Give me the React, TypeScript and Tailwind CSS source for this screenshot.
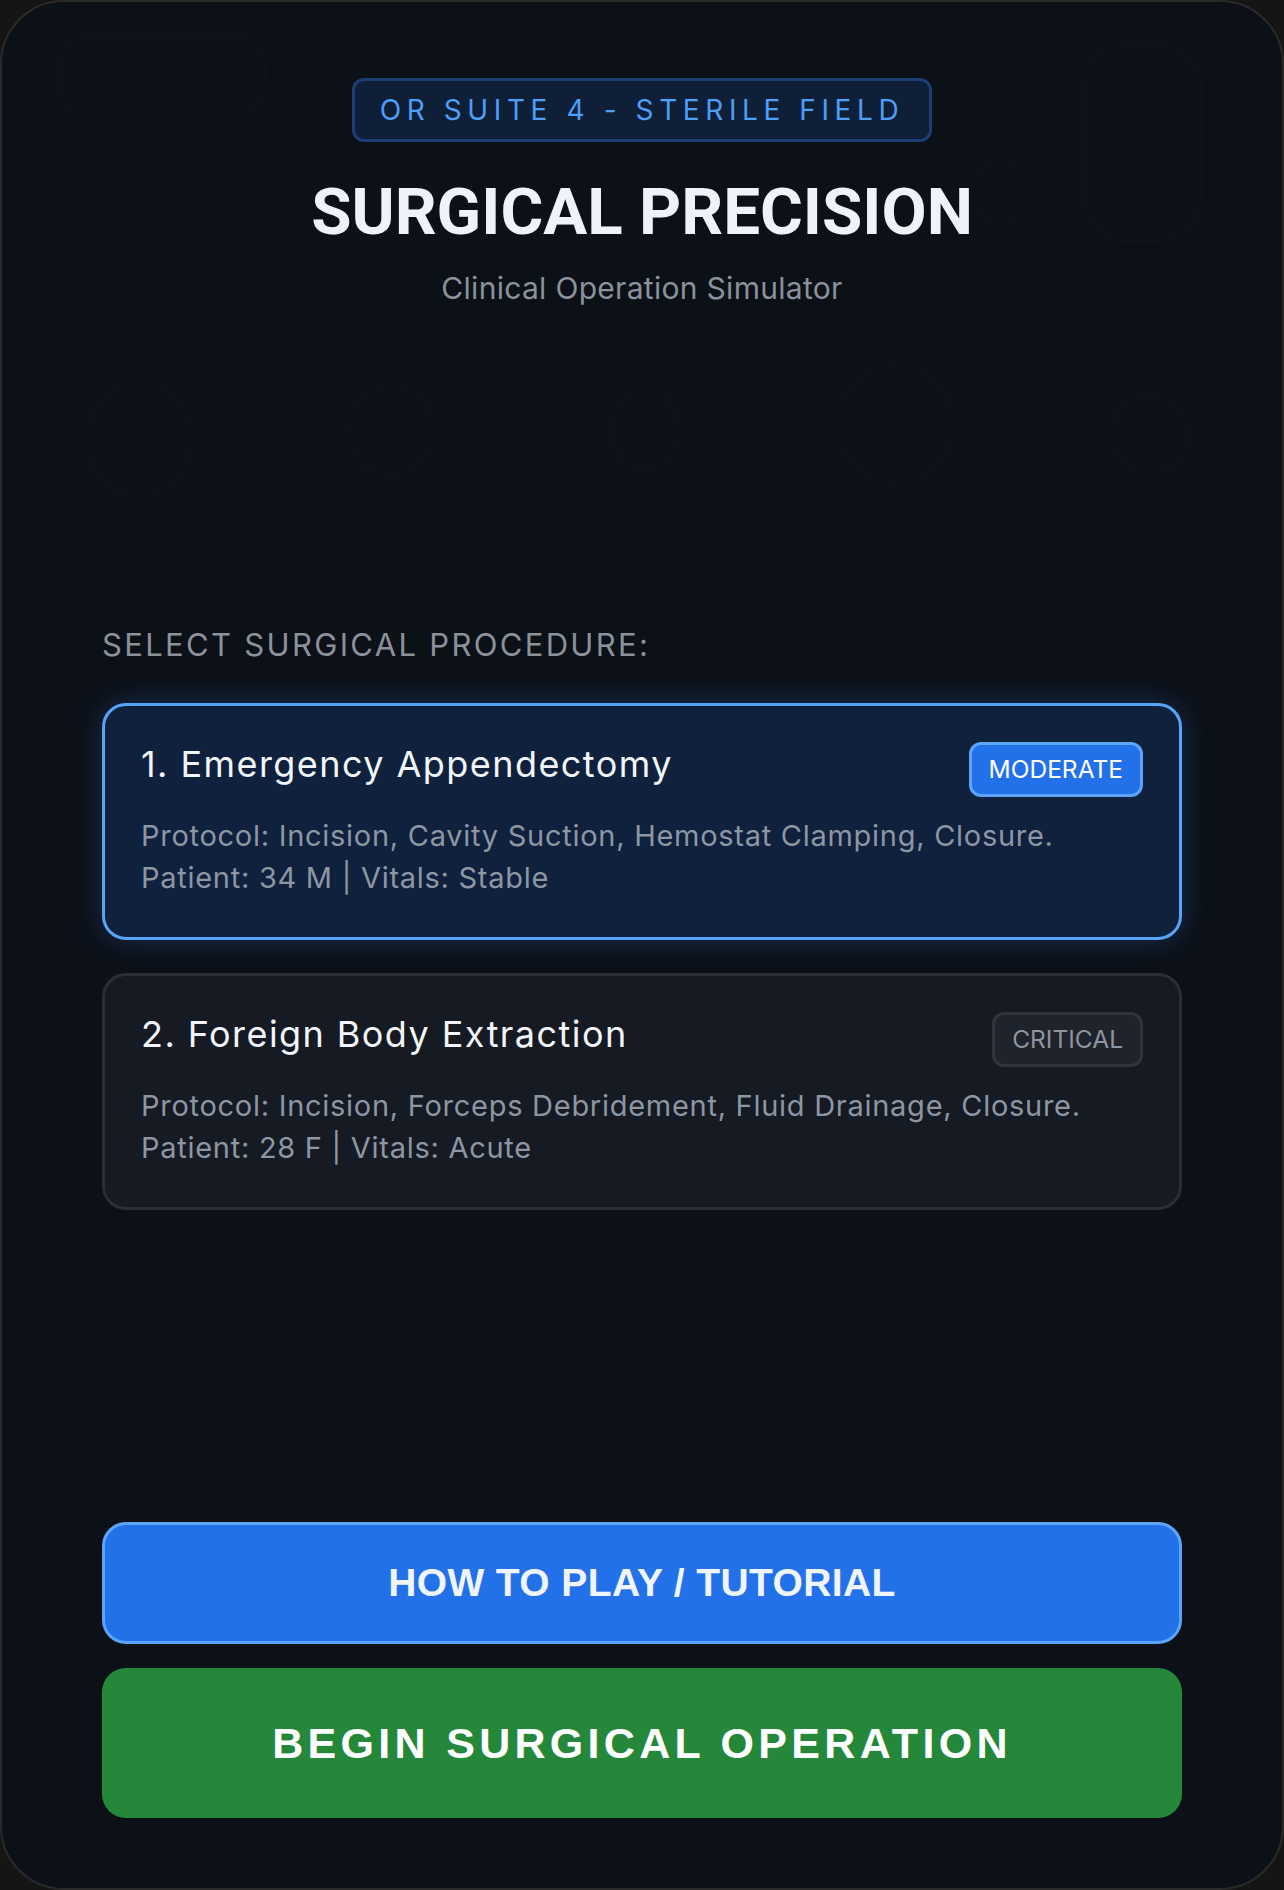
import React from "react";

type Procedure = {
  title: string;
  protocol: string;
  patient: string;
  level: string;
  selected: boolean;
};

const procedures: Procedure[] = [
  {
    title: "1. Emergency Appendectomy",
    protocol: "Protocol: Incision, Cavity Suction, Hemostat Clamping, Closure.",
    patient: "Patient: 34 M | Vitals: Stable",
    level: "MODERATE",
    selected: true,
  },
  {
    title: "2. Foreign Body Extraction",
    protocol: "Protocol: Incision, Forceps Debridement, Fluid Drainage, Closure.",
    patient: "Patient: 28 F | Vitals: Acute",
    level: "CRITICAL",
    selected: false,
  },
];

// Faint instrument silhouettes behind the menu
function Backdrop() {
  return (
    <svg
      className="pointer-events-none absolute inset-0 h-full w-full"
      viewBox="0 0 1280 1886"
      fill="rgba(255,255,255,0.006)"
      stroke="rgba(255,255,255,0.012)"
      strokeWidth="2"
    >
      <rect x="55" y="30" width="210" height="84" rx="30" />
      <rect x="1080" y="40" width="120" height="200" rx="40" />
      <circle cx="1000" cy="190" r="34" />
      <ellipse cx="137" cy="437" rx="55" ry="60" />
      <line x1="283" y1="380" x2="283" y2="470" />
      <ellipse cx="389" cy="428" rx="45" ry="48" />
      <ellipse cx="643" cy="427" rx="37" ry="43" />
      <ellipse cx="893" cy="422" rx="61" ry="62" />
      <ellipse cx="1148" cy="432" rx="41" ry="42" />
    </svg>
  );
}

function ProcedureCard({ p }: { p: Procedure }) {
  return (
    <div
      className={
        p.selected
          ? "rounded-[24px] border-[3px] border-[#58a3f8] bg-[#0f213d] px-[36px] pt-[36px] pb-[38px] shadow-[0_0_30px_rgba(56,139,253,0.26)]"
          : "rounded-[24px] border-[3px] border-[#2a2e36] bg-[#161a22] px-[36px] pt-[36px] pb-[38px]"
      }
    >
      <div className="flex items-start justify-between">
        <div className="text-[36px] leading-[44px] tracking-[0.04em] text-[#f2f5fa]">{p.title}</div>
        <div
          className={
            p.selected
              ? "flex h-[55px] items-center rounded-[12px] border-[3px] border-[#5ba4f7] bg-[#2271e8] px-[17px] text-[24.5px] text-white"
              : "flex h-[55px] items-center rounded-[12px] border-[3px] border-[#30343c] bg-[#1f232b] px-[17px] text-[24.5px] text-[#8f959d]"
          }
        >
          {p.level}
        </div>
      </div>
      <div className="mt-[18px] text-[29px] leading-[42px] tracking-[0.025em] text-[#8d96a3]">
        <div>{p.protocol}</div>
        <div>{p.patient}</div>
      </div>
    </div>
  );
}

export default function App() {
  return (
    <div className="min-h-[1890px] w-full bg-[#151515] font-['Inter',sans-serif]">
      <div className="relative flex h-[1890px] flex-col overflow-hidden rounded-[64px] border-2 border-[#2a2a2a] bg-[#0c1017] px-[100px] pt-[76px] pb-[70px]">
        <Backdrop />

        <header className="relative flex flex-col items-center">
          <div className="flex h-[64px] w-[580px] items-center justify-center rounded-[12px] border-[3px] border-[#1b3f75] bg-[#0f1f38] text-[28px] tracking-[0.2em] text-[#4d9ef5]">
            OR SUITE 4 - STERILE FIELD
          </div>
          <h1 className="mt-[37px] font-['Roboto',sans-serif] text-[65.5px] font-bold leading-[66px] text-[#eef3fb]">
            SURGICAL PRECISION
          </h1>
          <p className="mt-[25px] text-[30px] leading-[36px] tracking-[0.01em] text-[#8b929c]">
            Clinical Operation Simulator
          </p>
        </header>

        <div className="relative mt-[321px] text-[31px] leading-[36px] tracking-[0.075em] text-[#8b929b]">
          SELECT SURGICAL PROCEDURE:
        </div>

        <div className="relative mt-[40px] flex flex-col gap-[33px]">
          {procedures.map((p) => (
            <ProcedureCard key={p.title} p={p} />
          ))}
        </div>

        <div className="flex-1" />

        <div className="relative flex flex-col gap-[24px] font-['Liberation_Sans',Arial,sans-serif] font-bold">
          <button className="flex h-[122px] items-center justify-center rounded-[24px] border-[3px] border-[#5ba4f7] bg-[#2271e8] text-[39px] tracking-[0.01em] text-[#f0f4fc]">
            HOW TO PLAY / TUTORIAL
          </button>
          <button className="flex h-[150px] items-center justify-center rounded-[24px] bg-[#25873a] text-[43px] tracking-[0.1em] text-white">
            BEGIN SURGICAL OPERATION
          </button>
        </div>
      </div>
    </div>
  );
}
